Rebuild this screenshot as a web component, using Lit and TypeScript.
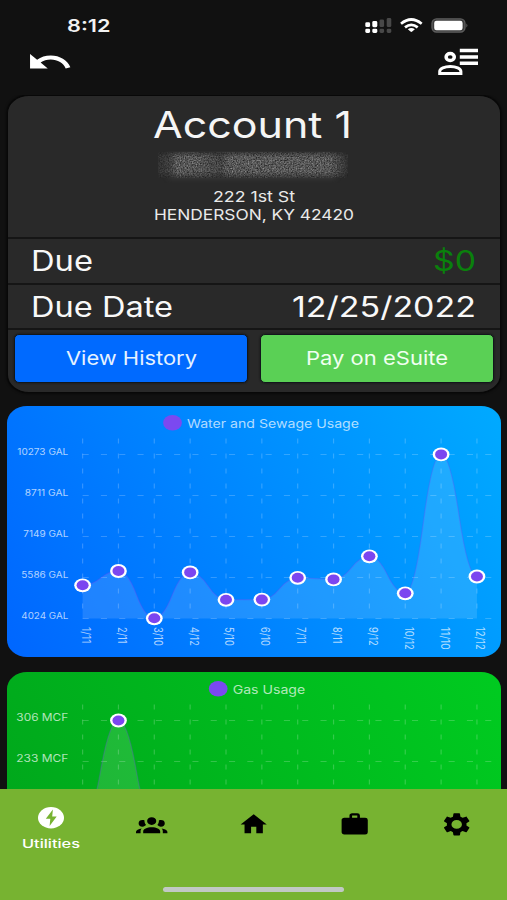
import { LitElement, html, svg, css } from "lit";
import { customElement, property } from "lit/decorators.js";

/** Text run stretched to a fixed width; `base` is the baseline inside its box. */
@customElement("wide-text")
export class WideText extends LitElement {
  @property() text = "";
  @property({ type: Number }) w = 100;
  @property({ type: Number }) h = 20;
  @property({ type: Number }) size = 16;
  @property({ type: Number }) base = 16;
  @property({ type: Number }) weight = 400;

  static styles = css`
    :host { display: block; flex: none; }
    svg { display: block; overflow: visible; }
    text { font-family: Inter, "Liberation Sans", sans-serif; fill: currentColor; }
  `;

  render() {
    return html`<svg width=${this.w} height=${this.h}>
      <text x="0" y=${this.base} font-size=${this.size} font-weight=${this.weight}
        textLength=${this.w} lengthAdjust="spacingAndGlyphs">${this.text}</text>
    </svg>`;
  }
}

interface Series {
  title: string;
  titleLeft: number;
  titleWidth: number;
  unitRows: string[];
  unitSize: number;
  unitWidths: number[];
  labels: string[];
  ys: number[];
}

const X0 = 75.6;
const STEP = 35.85;
const ROWS = [48.5, 89.5, 130.5, 171.5, 212.5];
const LABEL_WIDTHS: Record<number, number> = { 4: 18.8, 5: 22.8 };

@customElement("usage-chart")
export class UsageChart extends LitElement {
  @property({ attribute: false }) series!: Series;

  static styles = css`
    :host { display: block; }
    .plot { display: block; }
    text { font-family: Inter, "Liberation Sans", sans-serif; fill: #fff; fill-opacity: 0.7; }
    .grid { stroke: #fff; stroke-opacity: 0.2; stroke-width: 1.2; fill: none; }
    .area { fill: #fff; fill-opacity: 0.12; }
    .line { fill: none; stroke: #7c45f5; stroke-opacity: 0.28; stroke-width: 1.3; }
    .ring { fill: #fff; }
    .dot { fill: #7b46f0; }
    .key { fill: #7b49f0; }
  `;

  private curve(ys: number[]) {
    const x = (i: number) => X0 + STEP * i;
    let d = `M${x(0)} ${ys[0]}`;
    for (let i = 0; i < ys.length - 1; i++) {
      const mx = (x(i) + x(i + 1)) / 2;
      const my = (ys[i] + ys[i + 1]) / 2;
      d += ` Q${(mx + x(i)) / 2} ${ys[i]} ${mx} ${my} Q${(mx + x(i + 1)) / 2} ${ys[i + 1]} ${x(i + 1)} ${ys[i + 1]}`;
    }
    return d;
  }

  render() {
    const s = this.series;
    const d = this.curve(s.ys);
    const end = X0 + STEP * (s.ys.length - 1);
    return html`<svg class="plot" width="494" height="250">
      ${ROWS.map((y) => svg`<line class="grid" stroke-dasharray="6.1 12.2" x1=${X0} x2="492" y1=${y} y2=${y}></line>`)}
      ${s.ys.map((_, i) => svg`<line class="grid" stroke-dasharray="5 10" x1=${X0 + STEP * i} x2=${X0 + STEP * i} y1="32.5" y2="212.5"></line>`)}
      <path class="area" d=${`${d} L${end} 212.5 L${X0} 212.5 Z`}></path>
      <path class="line" d=${d}></path>
      ${s.ys.map((y, i) => svg`
        <ellipse class="ring" cx=${X0 + STEP * i} cy=${y} rx="8.4" ry="6.9"></ellipse>
        <ellipse class="dot" cx=${X0 + STEP * i} cy=${y} rx="6" ry="5"></ellipse>`)}
      ${s.unitRows.map((u, i) => svg`<text x=${61.3 - s.unitWidths[i]} y=${ROWS[i] + (s.unitSize > 10 ? 0.6 : 0.3)} font-size=${s.unitSize}
        textLength=${s.unitWidths[i]} lengthAdjust="spacingAndGlyphs">${u}</text>`)}
      ${s.labels.map((l, i) => svg`<text font-size="12" textLength=${l.endsWith("/11") ? 16.6 : LABEL_WIDTHS[l.length]} lengthAdjust="spacingAndGlyphs"
        transform=${`translate(${X0 + STEP * i - 0.6} 221) rotate(90)`}>${l}</text>`)}
      <ellipse class="key" cx=${s.titleLeft - 14.5} cy="16.8" rx="9.4" ry="7.8"></ellipse>
      <text x=${s.titleLeft} y="21.7" font-size="11.4" textLength=${s.titleWidth} lengthAdjust="spacingAndGlyphs">${s.title}</text>
    </svg>`;
  }
}

const WATER: Series = {
  title: "Water and Sewage Usage",
  titleLeft: 180,
  titleWidth: 172,
  unitRows: ["10273 GAL", "8711 GAL", "7149 GAL", "5586 GAL", "4024 GAL"],
  unitSize: 8.8,
  unitWidths: [51, 43.5, 45, 47, 47],
  labels: ["1/11", "2/11", "3/10", "4/12", "5/10", "6/10", "7/11", "8/11", "9/12", "10/12", "11/10", "12/12"],
  ys: [179.3, 165, 212.3, 166.4, 193.8, 193.6, 171.8, 173.4, 150.3, 187.3, 48.4, 170.5],
};

const GAS: Series = {
  title: "Gas Usage",
  titleLeft: 225.7,
  titleWidth: 72.5,
  unitRows: ["306 MCF", "233 MCF"],
  unitSize: 10.4,
  unitWidths: [52, 52],
  labels: [],
  ys: [150, 48.5, 150, 205, 208, 210, 211, 211, 210, 209, 207, 205],
};

const TABS = [
  "M12,5.5A3.5,3.5 0 0,1 15.5,9A3.5,3.5 0 0,1 12,12.5A3.5,3.5 0 0,1 8.5,9A3.5,3.5 0 0,1 12,5.5M5,8C5.56,8 6.08,8.15 6.53,8.42C6.38,9.85 6.8,11.27 7.66,12.38C7.16,13.34 6.16,14 5,14A3,3 0 0,1 2,11A3,3 0 0,1 5,8M19,8A3,3 0 0,1 22,11A3,3 0 0,1 19,14C17.84,14 16.84,13.34 16.34,12.38C17.2,11.27 17.62,9.85 17.47,8.42C17.92,8.15 18.44,8 19,8M5.5,18.25C5.5,16.18 8.41,14.5 12,14.5C15.59,14.5 18.5,16.18 18.5,18.25V20H5.5V18.25M0,20V18.5C0,17.11 1.89,15.94 4.45,15.6C3.86,16.28 3.5,17.22 3.5,18.25V20H0V20M24,20H20.5V18.25C20.5,17.22 20.14,16.28 19.55,15.6C22.11,15.94 24,17.11 24,18.5V20Z",
  "M10,20V14H14V20H19V12H22L12,3L2,12H5V20H10Z",
  "M10,2H14A2,2 0 0,1 16,4V6H20A2,2 0 0,1 22,8V19A2,2 0 0,1 20,21H4C2.89,21 2,20.1 2,19V8C2,6.89 2.89,6 4,6H8V4C8,2.89 8.89,2 10,2M14,6V4H10V6H14Z",
  "M12,16A4,4 0 0,1 8,12A4,4 0 0,1 12,8A4,4 0 0,1 16,12A4,4 0 0,1 12,16M19.43,12.97C19.47,12.65 19.5,12.33 19.5,12C19.5,11.67 19.47,11.34 19.43,11L21.54,9.37C21.73,9.22 21.78,8.95 21.66,8.73L19.66,5.27C19.54,5.05 19.27,4.96 19.05,5.05L16.56,6.05C16.04,5.66 15.5,5.32 14.87,5.07L14.5,2.42C14.46,2.18 14.25,2 14,2H10C9.75,2 9.54,2.18 9.5,2.42L9.13,5.07C8.5,5.32 7.96,5.66 7.44,6.05L4.95,5.05C4.73,4.96 4.46,5.05 4.34,5.27L2.34,8.73C2.21,8.95 2.27,9.22 2.46,9.37L4.57,11C4.53,11.34 4.5,11.67 4.5,12C4.5,12.33 4.53,12.65 4.57,12.97L2.46,14.63C2.27,14.78 2.21,15.05 2.34,15.27L4.34,18.73C4.46,18.95 4.73,19.03 4.95,18.95L7.44,17.94C7.96,18.34 8.5,18.68 9.13,18.93L9.5,21.58C9.54,21.82 9.75,22 10,22H14C14.25,22 14.46,21.82 14.5,21.58L14.87,18.93C15.5,18.67 16.04,18.34 16.56,17.94L19.05,18.95C19.27,19.03 19.54,18.95 19.66,18.73L21.66,15.27C21.78,15.05 21.73,14.78 21.54,14.63L19.43,12.97Z",
];

@customElement("app-root")
export class AppRoot extends LitElement {
  static styles = css`
    :host { display: flex; flex-direction: column; width: 507px; height: 900px; overflow: hidden; background: #111; color: #fff; }
    * { box-sizing: border-box; }
    svg { display: block; flex: none; }
    .status { display: flex; justify-content: space-between; height: 44px; padding: 16px 39px 0 67px; flex: none; color: #f2f2f2; }
    .nav { display: flex; justify-content: space-between; height: 51px; padding: 2px 28px 0 29px; flex: none; }
    .content { flex: 1; min-height: 0; overflow: hidden; padding: 0 6px 0 7px; }
    .card { height: 298px; border: 1px solid #080808; border-radius: 22px / 18px; background: #292929; box-shadow: 0 0 3px #000; overflow: hidden; }
    .who { height: 141px; display: flex; flex-direction: column; align-items: center; color: #f5f5f5; }
    .title { margin-right: 3px; }
    .mask { margin: 5px 3px 0 0; }
    .address { color: #e9e9e9; margin-top: 9px; display: flex; flex-direction: column; align-items: center; }
    .row { display: flex; justify-content: space-between; height: 46px; padding: 0 24px 0 23px; border-top: 2px solid #151515; color: #f8f8f8; }
    .row + .row { height: 45px; }
    .paid { color: #0a800c; }
    .actions { display: flex; gap: 12px; height: 62px; padding: 4px 6px 0; border-top: 2px solid #151515; }
    .button { flex: 1; height: 49px; border: 1px solid #12171c; border-radius: 5px; display: flex; justify-content: center; box-shadow: 0 0 2px #111; color: #e6f2ff; }
    .history { background: #006aff; }
    .pay { background: #5ad055; color: #f0fff0; }
    .chart { display: block; height: 251px; border-radius: 20px / 17px; overflow: hidden; }
    .water { margin-top: 13px; background: linear-gradient(62deg, #0066ff, #00aaff); }
    .gas { margin-top: 15px; background: linear-gradient(62deg, #00a41b, #00cb20); }
    .tabs { flex: none; height: 111px; background: #77b331; display: flex; flex-direction: column; align-items: center; }
    .items { display: grid; grid-template-columns: repeat(5, 1fr); justify-items: center; width: 507px; height: 98px; color: #000; }
    .item { padding-top: 22px; }
    .active { display: flex; flex-direction: column; align-items: center; gap: 6px; color: #fff; padding-top: 18px; }
    .home { width: 181px; height: 5px; border-radius: 3px; background: #c1c9c4; }
  `;

  private statusIcons() {
    return html`<svg width="104" height="20" viewBox="364 16 104 20">
      <g fill="#fff">
        <rect x="365.3" y="22.3" width="4.8" height="4.8" rx="1.4"></rect>
        <rect x="365.3" y="28.7" width="4.8" height="4.2" rx="1.4"></rect>
        <rect x="372.3" y="21" width="5" height="6.2" rx="1.4"></rect>
        <rect x="372.3" y="28.7" width="5" height="4.2" rx="1.4"></rect>
      </g>
      <g fill="#484848">
        <rect x="379.5" y="19.5" width="4.6" height="7.6" rx="1.4"></rect>
        <rect x="379.5" y="28.7" width="4.6" height="4.2" rx="1.4"></rect>
        <rect x="386.7" y="18" width="4.6" height="9.1" rx="1.4"></rect>
        <rect x="386.7" y="28.7" width="4.6" height="4.2" rx="1.4"></rect>
      </g>
      <g fill="none" stroke="#fff" stroke-width="2.7">
        <path d="M401 23.7Q411.3 15.3 421.7 23.7"></path>
        <path d="M405 27.4Q411.3 22.2 417.7 27.4"></path>
      </g>
      <path fill="#fff" d="M407.8 29.3Q411.3 26.8 414.9 29.3L412.2 31.6Q411.3 32.3 410.5 31.6Z"></path>
      <rect x="432" y="18.9" width="33" height="13.2" rx="4.5" fill="#3c3c3c" stroke="#606060" stroke-width="1.3"></rect>
      <rect x="434.2" y="20.8" width="28.4" height="9.4" rx="2.3" fill="#fff"></rect>
      <path d="M466.4 23.4Q468.4 25.4 466.4 27.4Z" fill="#606060"></path>
    </svg>`;
  }

  render() {
    return html`
      <div class="status">
        <wide-text text="8:12" w="43.5" h="20" size="17.8" base="16.3" weight="600"></wide-text>
        ${this.statusIcons()}
      </div>
      <div class="nav">
        <svg width="42" height="30" viewBox="29 46 42 30">
          <path fill="#fff" transform="translate(26.1 42.8) scale(1.97 1.6)"
            d="M12.5 8c-2.65 0-5.05.99-6.9 2.6L2 7v9h9l-3.62-3.62c1.39-1.16 3.16-1.88 5.12-1.88 3.54 0 6.55 2.31 7.6 5.5l2.37-.78C21.08 11.03 17.15 8 12.5 8z"></path>
        </svg>
        <svg width="42" height="30" viewBox="437 46 42 30">
          <g fill="none" stroke="#fff">
            <ellipse cx="450.2" cy="57" rx="4.1" ry="3.6" stroke-width="3.5"></ellipse>
            <path stroke-width="3" d="M439.7 73.4V71.4C439.7 68.6 444.6 66.5 450.3 66.5S460.9 68.6 460.9 71.4V73.4Z"></path>
            <path stroke-width="3.5" d="M459.8 50.5H478M459.8 57H478M459.8 63.3H478"></path>
          </g>
        </svg>
      </div>
      <div class="content">
        <div class="card">
          <div class="who">
            <wide-text class="title" text="Account 1" w="199" h="50" size="36.8" base="42"></wide-text>
            <svg class="mask" width="196" height="32" viewBox="0 0 196 32">
              <defs>
                <filter id="grain" x="0" y="0" width="1" height="1" color-interpolation-filters="sRGB">
                  <feTurbulence type="fractalNoise" baseFrequency="0.75" numOctaves="2" seed="4"></feTurbulence>
                  <feColorMatrix values="0.6 0 0 0 0.04  0.6 0 0 0 0.04  0.6 0 0 0 0.04  0 0 0 0 1"></feColorMatrix>
                </filter>
                <filter id="soft" x="-0.1" y="-0.4" width="1.2" height="1.8"><feGaussianBlur stdDeviation="3"></feGaussianBlur></filter>
                <linearGradient id="fade">
                  <stop offset="0" stop-color="#222" stop-opacity=".7"></stop>
                  <stop offset=".06" stop-color="#222" stop-opacity=".5"></stop>
                  <stop offset=".1" stop-color="#222" stop-opacity="0"></stop>
                  <stop offset=".2" stop-color="#222" stop-opacity="0"></stop>
                  <stop offset=".33" stop-color="#222" stop-opacity=".4"></stop>
                  <stop offset=".38" stop-color="#222" stop-opacity="0"></stop>
                  <stop offset=".9" stop-color="#222" stop-opacity="0"></stop>
                  <stop offset="1" stop-color="#222" stop-opacity=".75"></stop>
                </linearGradient>
                <linearGradient id="edge" x2="0" y2="1">
                  <stop offset="0" stop-color="#222" stop-opacity=".6"></stop>
                  <stop offset=".2" stop-color="#222" stop-opacity="0"></stop>
                  <stop offset=".75" stop-color="#222" stop-opacity="0"></stop>
                  <stop offset="1" stop-color="#222" stop-opacity=".6"></stop>
                </linearGradient>
              </defs>
              <rect x="14" y="3" width="166" height="24" fill="#555" opacity=".5" filter="url(#soft)"></rect>
              <rect x="3" y="1" width="190" height="26" filter="url(#grain)"></rect>
              <rect x="3" y="1" width="190" height="26" fill="url(#fade)"></rect>
              <rect x="3" y="1" width="190" height="26" fill="url(#edge)"></rect>
            </svg>
            <div class="address">
              <wide-text text="222 1st St" w="82" h="17.5" size="14.8" base="10"></wide-text>
              <wide-text text="HENDERSON, KY 42420" w="200" h="18" size="14.8" base="9.7"></wide-text>
            </div>
          </div>
          <div class="row">
            <wide-text text="Due" w="62" h="44" size="28" base="32"></wide-text>
            <wide-text class="paid" text="$0" w="43" h="44" size="28" base="32"></wide-text>
          </div>
          <div class="row">
            <wide-text text="Due Date" w="142" h="43" size="28" base="32"></wide-text>
            <wide-text text="12/25/2022" w="184" h="43" size="28" base="32"></wide-text>
          </div>
          <div class="actions">
            <div class="button history"><wide-text text="View History" w="131" h="47" size="18.8" base="30"></wide-text></div>
            <div class="button pay"><wide-text text="Pay on eSuite" w="142" h="47" size="18.8" base="30"></wide-text></div>
          </div>
        </div>
        <usage-chart class="chart water" .series=${WATER}></usage-chart>
        <usage-chart class="chart gas" .series=${GAS}></usage-chart>
      </div>
      <div class="tabs">
        <div class="items">
          <div class="active">
            <svg width="26" height="22" viewBox="38 807 26 22">
              <ellipse cx="51" cy="817.8" rx="13" ry="10.7" fill="#fff"></ellipse>
              <path fill="#77b331" d="M52.9 809.6L45.8 818.8H50.3L49.6 826L56.7 816.6H52.2Z"></path>
            </svg>
            <wide-text text="Utilities" w="58" h="18" size="11.4" base="13.2" weight="500"></wide-text>
          </div>
          ${TABS.map((d) => html`<div class="item">
            <svg width="31.4" height="26.8" viewBox="0 0 24 24" preserveAspectRatio="none"><path fill="currentColor" fill-rule="evenodd" d=${d}></path></svg>
          </div>`)}
        </div>
        <div class="home"></div>
      </div>
    `;
  }
}
